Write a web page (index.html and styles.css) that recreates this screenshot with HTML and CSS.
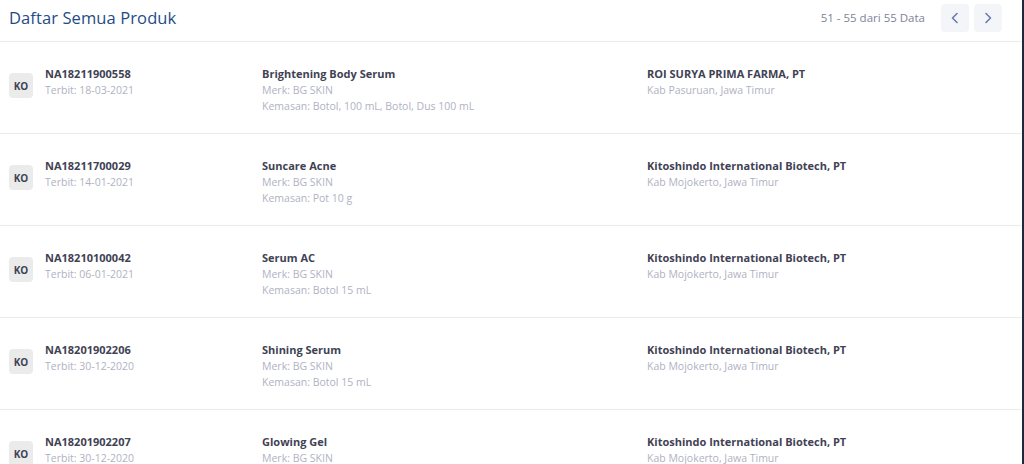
FILE: index.html
```html
<!DOCTYPE html>
<html lang="id">
<head>
<meta charset="utf-8">
<title>Daftar Semua Produk</title>
<link rel="stylesheet" href="styles.css">
</head>
<body>
<div class="page">
  <div class="header">
    <h1 class="title">Daftar Semua Produk</h1>
    <div class="pager">
      <span class="pager-info">51 - 55 dari 55 Data</span>
      <button class="pager-btn" aria-label="Sebelumnya">
        <svg width="10" height="12" viewBox="0 0 10 12"><path d="M7 1.5 L2.5 6 L7 10.5" fill="none" stroke="#6a7cae" stroke-width="1.6" stroke-linecap="round" stroke-linejoin="round"/></svg>
      </button>
      <button class="pager-btn" aria-label="Berikutnya">
        <svg width="10" height="12" viewBox="0 0 10 12"><path d="M3 1.5 L7.5 6 L3 10.5" fill="none" stroke="#6a7cae" stroke-width="1.6" stroke-linecap="round" stroke-linejoin="round"/></svg>
      </button>
    </div>
  </div>

  <div class="row">
    <div class="col col-id">
      <span class="badge">KO</span>
      <div>
        <div class="strong">NA18211900558</div>
        <div class="muted">Terbit: 18-03-2021</div>
      </div>
    </div>
    <div class="col col-prod">
      <div class="strong">Brightening Body Serum</div>
      <div class="muted">Merk: BG SKIN</div>
      <div class="muted">Kemasan: Botol, 100 mL, Botol, Dus 100 mL</div>
    </div>
    <div class="col col-comp">
      <div class="strong">ROI SURYA PRIMA FARMA, PT</div>
      <div class="muted">Kab Pasuruan, Jawa Timur</div>
    </div>
  </div>

  <div class="row">
    <div class="col col-id">
      <span class="badge">KO</span>
      <div>
        <div class="strong">NA18211700029</div>
        <div class="muted">Terbit: 14-01-2021</div>
      </div>
    </div>
    <div class="col col-prod">
      <div class="strong">Suncare Acne</div>
      <div class="muted">Merk: BG SKIN</div>
      <div class="muted">Kemasan: Pot 10 g</div>
    </div>
    <div class="col col-comp">
      <div class="strong">Kitoshindo International Biotech, PT</div>
      <div class="muted">Kab Mojokerto, Jawa Timur</div>
    </div>
  </div>

  <div class="row">
    <div class="col col-id">
      <span class="badge">KO</span>
      <div>
        <div class="strong">NA18210100042</div>
        <div class="muted">Terbit: 06-01-2021</div>
      </div>
    </div>
    <div class="col col-prod">
      <div class="strong">Serum AC</div>
      <div class="muted">Merk: BG SKIN</div>
      <div class="muted">Kemasan: Botol 15 mL</div>
    </div>
    <div class="col col-comp">
      <div class="strong">Kitoshindo International Biotech, PT</div>
      <div class="muted">Kab Mojokerto, Jawa Timur</div>
    </div>
  </div>

  <div class="row">
    <div class="col col-id">
      <span class="badge">KO</span>
      <div>
        <div class="strong">NA18201902206</div>
        <div class="muted">Terbit: 30-12-2020</div>
      </div>
    </div>
    <div class="col col-prod">
      <div class="strong">Shining Serum</div>
      <div class="muted">Merk: BG SKIN</div>
      <div class="muted">Kemasan: Botol 15 mL</div>
    </div>
    <div class="col col-comp">
      <div class="strong">Kitoshindo International Biotech, PT</div>
      <div class="muted">Kab Mojokerto, Jawa Timur</div>
    </div>
  </div>

  <div class="row">
    <div class="col col-id">
      <span class="badge">KO</span>
      <div>
        <div class="strong">NA18201902207</div>
        <div class="muted">Terbit: 30-12-2020</div>
      </div>
    </div>
    <div class="col col-prod">
      <div class="strong">Glowing Gel</div>
      <div class="muted">Merk: BG SKIN</div>
    </div>
    <div class="col col-comp">
      <div class="strong">Kitoshindo International Biotech, PT</div>
      <div class="muted">Kab Mojokerto, Jawa Timur</div>
    </div>
  </div>
</div>
</body>
</html>
```

FILE: styles.css
```css
* { box-sizing: border-box; }
html, body { margin: 0; padding: 0; height: 100%; overflow: hidden; }
body {
  background: #ffffff;
  font-family: "Open Sans", "Liberation Sans", sans-serif;
}
.page {
  height: 100%;
  border-right: 2px solid #1c2a3c;
}
.header {
  display: flex;
  align-items: center;
  justify-content: space-between;
  height: 42px;
  padding: 0 20px 6px 9px;
  border-bottom: 1px solid #ececec;
}
.title {
  margin: 0;
  font-size: 16.5px;
  font-weight: 500;
  color: #1f4c88;
  letter-spacing: 0.1px;
}
.pager {
  display: flex;
  align-items: center;
  gap: 5px;
}
.pager-info {
  font-size: 11.5px;
  color: #7e8299;
  margin-right: 11px;
}
.pager-btn {
  width: 28px;
  height: 28px;
  border: 0;
  border-radius: 4px;
  background: #f3f5f9;
  display: flex;
  align-items: center;
  justify-content: center;
  padding: 0;
}
.row {
  display: flex;
  height: 92px;
  padding-top: 24px;
  border-bottom: 1px solid #ececec;
}
.col { font-size: 10.5px; line-height: 16px; }
.col-id {
  display: flex;
  align-items: flex-start;
  width: 262px;
  padding-left: 9px;
}
.col-prod { width: 385px; }
.col-comp { flex: 1; }
.badge {
  display: flex;
  align-items: center;
  justify-content: center;
  width: 24px;
  height: 25px;
  margin-top: 7px;
  margin-right: 12px;
  border-radius: 4px;
  background: #ebebeb;
  color: #3f4254;
  font-size: 10px;
  font-weight: 700;
}
.strong {
  color: #3f4254;
  font-weight: 700;
  font-size: 11px;
}
.muted {
  color: #b0b2c2;
}
```
